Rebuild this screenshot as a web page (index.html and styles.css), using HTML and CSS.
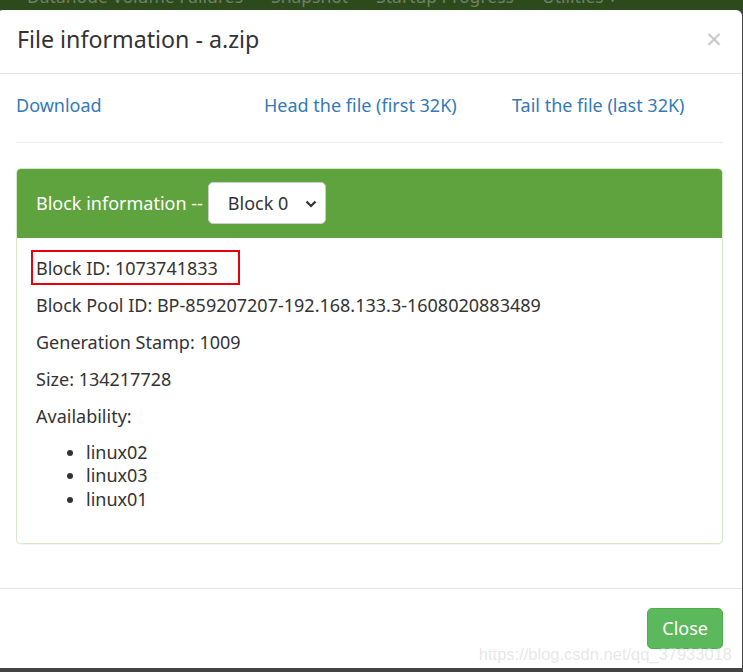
FILE: index.html
```html
<!DOCTYPE html>
<html>
<head>
<meta charset="utf-8">
<link rel="stylesheet" href="styles.css">
</head>
<body>
<div class="navbar">
  <div class="nav-items">
    <span>Datanode Volume Failures</span>
    <span>Snapshot</span>
    <span>Startup Progress</span>
    <span>Utilities ▾</span>
  </div>
</div>
<div class="modal">
  <div class="modal-header">
    <h4 class="modal-title">File information - a.zip</h4>
    <span class="close">×</span>
  </div>
  <div class="modal-body">
    <div class="links">
      <a class="link">Download</a>
      <a class="link">Head the file (first 32K)</a>
      <a class="link">Tail the file (last 32K)</a>
    </div>
    <hr class="divider">
    <div class="panel">
      <div class="panel-heading">
        <span class="heading-text">Block information --</span>
        <div class="select">
          <span>Block 0</span>
          <svg class="chevron" width="12" height="8" viewBox="0 0 12 8"><path d="M1.5 1.5 L6 6 L10.5 1.5" fill="none" stroke="#333" stroke-width="2.2"/></svg>
        </div>
      </div>
      <div class="panel-body">
        <p class="info first">Block ID: 1073741833<span class="mark"></span></p>
        <p class="info">Block Pool ID: BP-859207207-192.168.133.3-1608020883489</p>
        <p class="info">Generation Stamp: 1009</p>
        <p class="info">Size: 134217728</p>
        <p class="info">Availability:</p>
        <ul class="hosts">
          <li>linux02</li>
          <li>linux03</li>
          <li>linux01</li>
        </ul>
      </div>
    </div>
  </div>
  <div class="modal-footer">
    <button class="btn-close">Close</button>
    <span class="watermark">https://blog.csdn.net/qq_37933018</span>
  </div>
</div>
</body>
</html>
```
FILE: styles.css
```css
html, body {
  margin: 0;
  padding: 0;
}
body {
  background: #444444;
  width: 743px;
  height: 672px;
  overflow: hidden;
  font-family: "Noto Sans", "Open Sans", sans-serif;
  font-size: 18px;
  color: #333333;
}
.navbar {
  height: 10px;
  background: #2c4a1c;
  overflow: hidden;
}
.nav-items {
  display: flex;
  gap: 28px;
  padding-left: 27px;
  margin-top: -14px;
  color: #6f8165;
  font-size: 17.5px;
  line-height: 20px;
}
.modal {
  position: relative;
  background: #ffffff;
  margin-left: -3px;
  width: 745px;
  border-radius: 6px 6px 0 0;
  height: 658px;
  box-sizing: border-box;
}
.modal-header {
  display: flex;
  align-items: center;
  justify-content: space-between;
  height: 64px;
  box-sizing: border-box;
  padding: 0 20px 4px 20px;
  border-bottom: 1px solid #e5e5e5;
}
.modal-title {
  margin: 0;
  font-weight: normal;
  font-size: 23.2px;
  line-height: 25px;
  color: #333;
}
.close {
  font-size: 28px;
  color: #c8c8c8;
  line-height: 1;
  margin-top: -4px;
}
.modal-body {
  padding: 18.75px 19px 19px 19px;
}
.links {
  display: grid;
  grid-template-columns: 248px 248px 1fr;
  line-height: 25px;
}
.link {
  color: #337ab7;
  text-decoration: none;
}
.divider {
  border: 0;
  border-top: 1px solid #eeeeee;
  margin: 24px 0 25px;
}
.panel {
  border: 1px solid #d6e9c6;
  border-radius: 5px;
  overflow: hidden;
  margin-bottom: 25px;
  box-shadow: 0 1px 1px rgba(0,0,0,0.05);
}
.panel-heading {
  display: flex;
  align-items: center;
  gap: 5px;
  background: #5fa33e;
  color: #ffffff;
  padding: 12.5px 19px;
  height: 69px;
  box-sizing: border-box;
}
.select {
  display: flex;
  align-items: center;
  justify-content: space-between;
  width: 118px;
  height: 42px;
  box-sizing: border-box;
  background: #ffffff;
  border: 1px solid #cccccc;
  border-radius: 5px;
  padding: 0 8px 0 19px;
  color: #333;
}
.chevron {
  margin-top: 1px;
}
.panel-body {
  padding: 18px 19px 19px;
}
.info {
  position: relative;
  margin: 0 0 12.5px;
  line-height: 24.5px;
}
.mark {
  position: absolute;
  left: -5px;
  top: -6px;
  width: 205px;
  height: 31px;
  border: 2px solid #e8000b;
}
.hosts {
  margin: 0 0 12.5px;
  padding-left: 50px;
  line-height: 23.5px;
}
.modal-footer {
  position: relative;
  border-top: 1px solid #e5e5e5;
  display: flex;
  justify-content: flex-end;
  padding: 19px 19px;
}
.btn-close {
  font-family: inherit;
  font-size: 18px;
  color: #ffffff;
  background: #5cb85c;
  border: 1px solid #4cae4c;
  border-radius: 5px;
  height: 41px;
  padding: 0 14px;
  line-height: 25px;
}
.watermark {
  position: absolute;
  right: 10px;
  bottom: 4px;
  font-family: "Liberation Sans", Arial, sans-serif;
  font-size: 16.5px;
  color: rgba(215, 215, 215, 0.6);
  pointer-events: none;
}
```
